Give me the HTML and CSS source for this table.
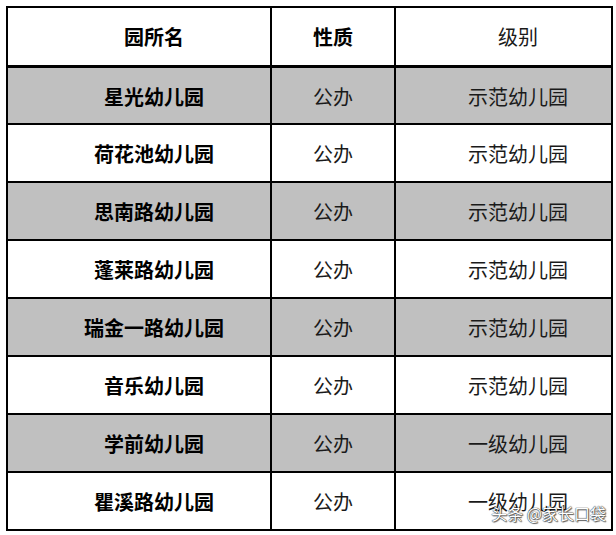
FILE: index.html
```html
<!DOCTYPE html>
<html lang="zh">
<head>
<meta charset="utf-8">
<link rel="stylesheet" href="styles.css">
</head>
<body>
<div class="page">
  <div class="grid">
    <div class="cell head c1 b">园所名</div>
    <div class="cell head c2 b">性质</div>
    <div class="cell head c3">级别</div>

    <div class="cell grey c1 b">星光幼儿园</div>
    <div class="cell grey c2">公办</div>
    <div class="cell grey c3">示范幼儿园</div>

    <div class="cell c1 b">荷花池幼儿园</div>
    <div class="cell c2">公办</div>
    <div class="cell c3">示范幼儿园</div>

    <div class="cell grey c1 b">思南路幼儿园</div>
    <div class="cell grey c2">公办</div>
    <div class="cell grey c3">示范幼儿园</div>

    <div class="cell c1 b">蓬莱路幼儿园</div>
    <div class="cell c2">公办</div>
    <div class="cell c3">示范幼儿园</div>

    <div class="cell grey c1 b">瑞金一路幼儿园</div>
    <div class="cell grey c2">公办</div>
    <div class="cell grey c3">示范幼儿园</div>

    <div class="cell c1 b">音乐幼儿园</div>
    <div class="cell c2">公办</div>
    <div class="cell c3">示范幼儿园</div>

    <div class="cell grey c1 b">学前幼儿园</div>
    <div class="cell grey c2">公办</div>
    <div class="cell grey c3">一级幼儿园</div>

    <div class="cell c1 b">瞿溪路幼儿园</div>
    <div class="cell c2">公办</div>
    <div class="cell c3">一级幼儿园</div>
  </div>
  <div class="watermark">头条 @家长口袋</div>
</div>
</body>
</html>
```

FILE: styles.css
```css
html, body {
  margin: 0;
  padding: 0;
  background: #ffffff;
}
.page {
  position: relative;
  width: 616px;
  height: 535px;
  padding: 6px 0 0 6px;
  box-sizing: border-box;
  font-family: "Noto Sans CJK SC", "Noto Sans", sans-serif;
}
.grid {
  display: grid;
  grid-template-columns: 264px 124px 217px;
  grid-template-rows: 60px 57px;
  grid-auto-rows: 58px;
  width: 607px;
  border-top: 2px solid #000;
  border-left: 2px solid #000;
  box-sizing: border-box;
}
.cell {
  box-sizing: border-box;
  border-right: 2px solid #000;
  border-bottom: 2px solid #000;
  display: flex;
  align-items: center;
  justify-content: center;
  font-size: 20px;
  color: #1a1a1a;
  line-height: 1;
  padding-top: 2px;
}
.head {
  border-bottom-width: 3px;
  padding-top: 1px;
}
.grey {
  background: #c0c0c0;
}
.b {
  font-weight: 700;
  color: #000;
}
.c1 {
  padding-left: 30px;
}
.c3 {
  padding-left: 29px;
}
.watermark {
  position: absolute;
  right: 10px;
  bottom: 14px;
  font-size: 16px;
  line-height: 1;
  color: #ffffff;
  text-shadow: 0 0 1px #333, 0 0 1px #333, 1px 1px 1px rgba(0,0,0,0.6);
}
```
